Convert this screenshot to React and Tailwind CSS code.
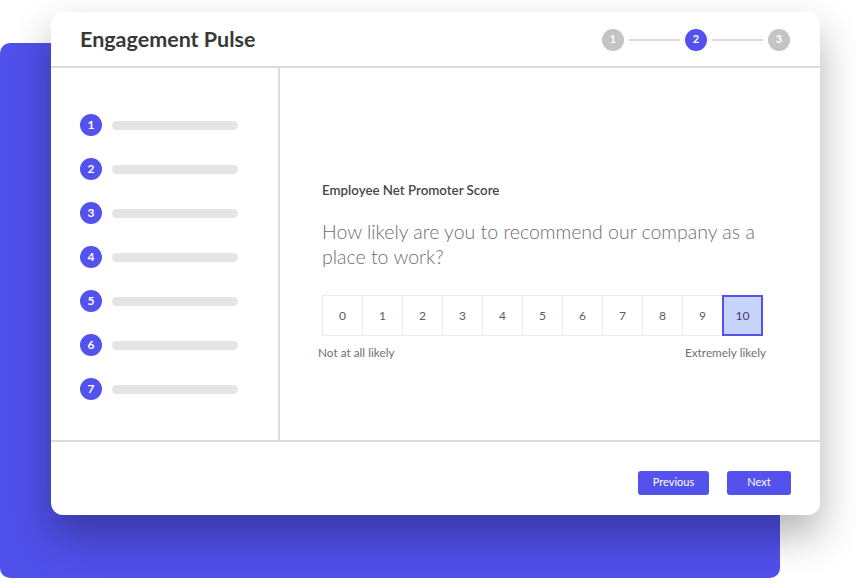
import React from "react";

const steps = [1, 2, 3];
const sideItems = [1, 2, 3, 4, 5, 6, 7];
const scale = [0, 1, 2, 3, 4, 5, 6, 7, 8, 9, 10];

export default function App() {
  return (
    <div
      className="relative h-[585px] w-[856px] overflow-hidden bg-white"
      style={{ fontFamily: "Lato, 'Open Sans', sans-serif" }}
    >
      {/* purple backdrop */}
      <div className="absolute left-0 top-[43px] h-[535px] w-[780px] rounded-[10px] bg-[#5050ea]" />

      <div className="relative pl-[51px] pt-[12px]">
        <div className="flex h-[503px] w-[769px] flex-col rounded-[12px] bg-white shadow-[0_20px_40px_rgba(0,0,0,0.3)]">
          {/* Header */}
          <div className="flex h-[56px] items-center justify-between border-b-2 border-[#dcdcdc] pl-[29px] pr-[30px]">
            <h1 className="pt-[1px] text-[21.5px] font-bold text-[#383838]">Engagement Pulse</h1>
            <div className="flex items-center pt-[1px]">
              {steps.map((s, i) => (
                <div key={s} className="flex items-center">
                  {i > 0 && <div className="mx-[5px] h-[2px] w-[51px] bg-[#dadada]" />}
                  <span
                    className={`flex h-[22px] w-[22px] items-center justify-center rounded-full text-[11px] font-bold text-white ${
                      s === 2 ? "bg-[#5352ed]" : "bg-[#c4c4c4]"
                    }`}
                  >
                    {s}
                  </span>
                </div>
              ))}
            </div>
          </div>

          {/* Body */}
          <div className="flex h-[374px] border-b-2 border-[#dcdcdc]">
            <div className="flex w-[229px] flex-col gap-[22px] border-r-2 border-[#dcdcdc] pl-[29px] pt-[46px]">
              {sideItems.map((n) => (
                <div key={n} className="flex items-center gap-[10px]">
                  <span className="flex h-[22px] w-[22px] items-center justify-center rounded-full bg-[#5352ed] text-[12px] font-bold text-white">
                    {n}
                  </span>
                  <div className="h-[9px] w-[126px] rounded-full bg-[#e4e5e7]" />
                </div>
              ))}
            </div>

            <div className="flex-1 pl-[42px] pt-[114px]">
              <p className="text-[13.3px] font-semibold leading-[16px] text-[#474747]">
                Employee Net Promoter Score
              </p>
              <p className="mt-[21px] w-[445px] text-[19.5px] font-light leading-[25px] text-[#6e6e6e]">
                How likely are you to recommend our company as a place to work?
              </p>
              <div className="mt-[26px] flex w-[441px]">
                {scale.map((v) =>
                  v === 10 ? (
                    <div
                      key={v}
                      className="flex h-[41px] w-[41px] items-center justify-center border-2 border-[#5352ed] bg-[#c7d4fb] text-[12px] text-[#3d3d7a]"
                    >
                      {v}
                    </div>
                  ) : (
                    <div
                      key={v}
                      className="-mr-px flex h-[41px] w-[41px] items-center justify-center border border-[#ececec] text-[12px] text-[#5c5c5c]"
                    >
                      {v}
                    </div>
                  )
                )}
              </div>
              <div className="-ml-[4px] mt-[8px] flex w-[448px] justify-between text-[11.8px] text-[#707070]">
                <span>Not at all likely</span>
                <span>Extremely likely</span>
              </div>
            </div>
          </div>

          {/* Footer */}
          <div className="flex flex-1 items-center justify-end gap-[18px] pt-[8px] pr-[29px]">
            <button className="h-[24px] w-[71px] rounded-[3px] bg-[#5352ed] text-[11px] text-white">
              Previous
            </button>
            <button className="h-[24px] w-[64px] rounded-[3px] bg-[#5352ed] text-[11px] text-white">
              Next
            </button>
          </div>
        </div>
      </div>
    </div>
  );
}
